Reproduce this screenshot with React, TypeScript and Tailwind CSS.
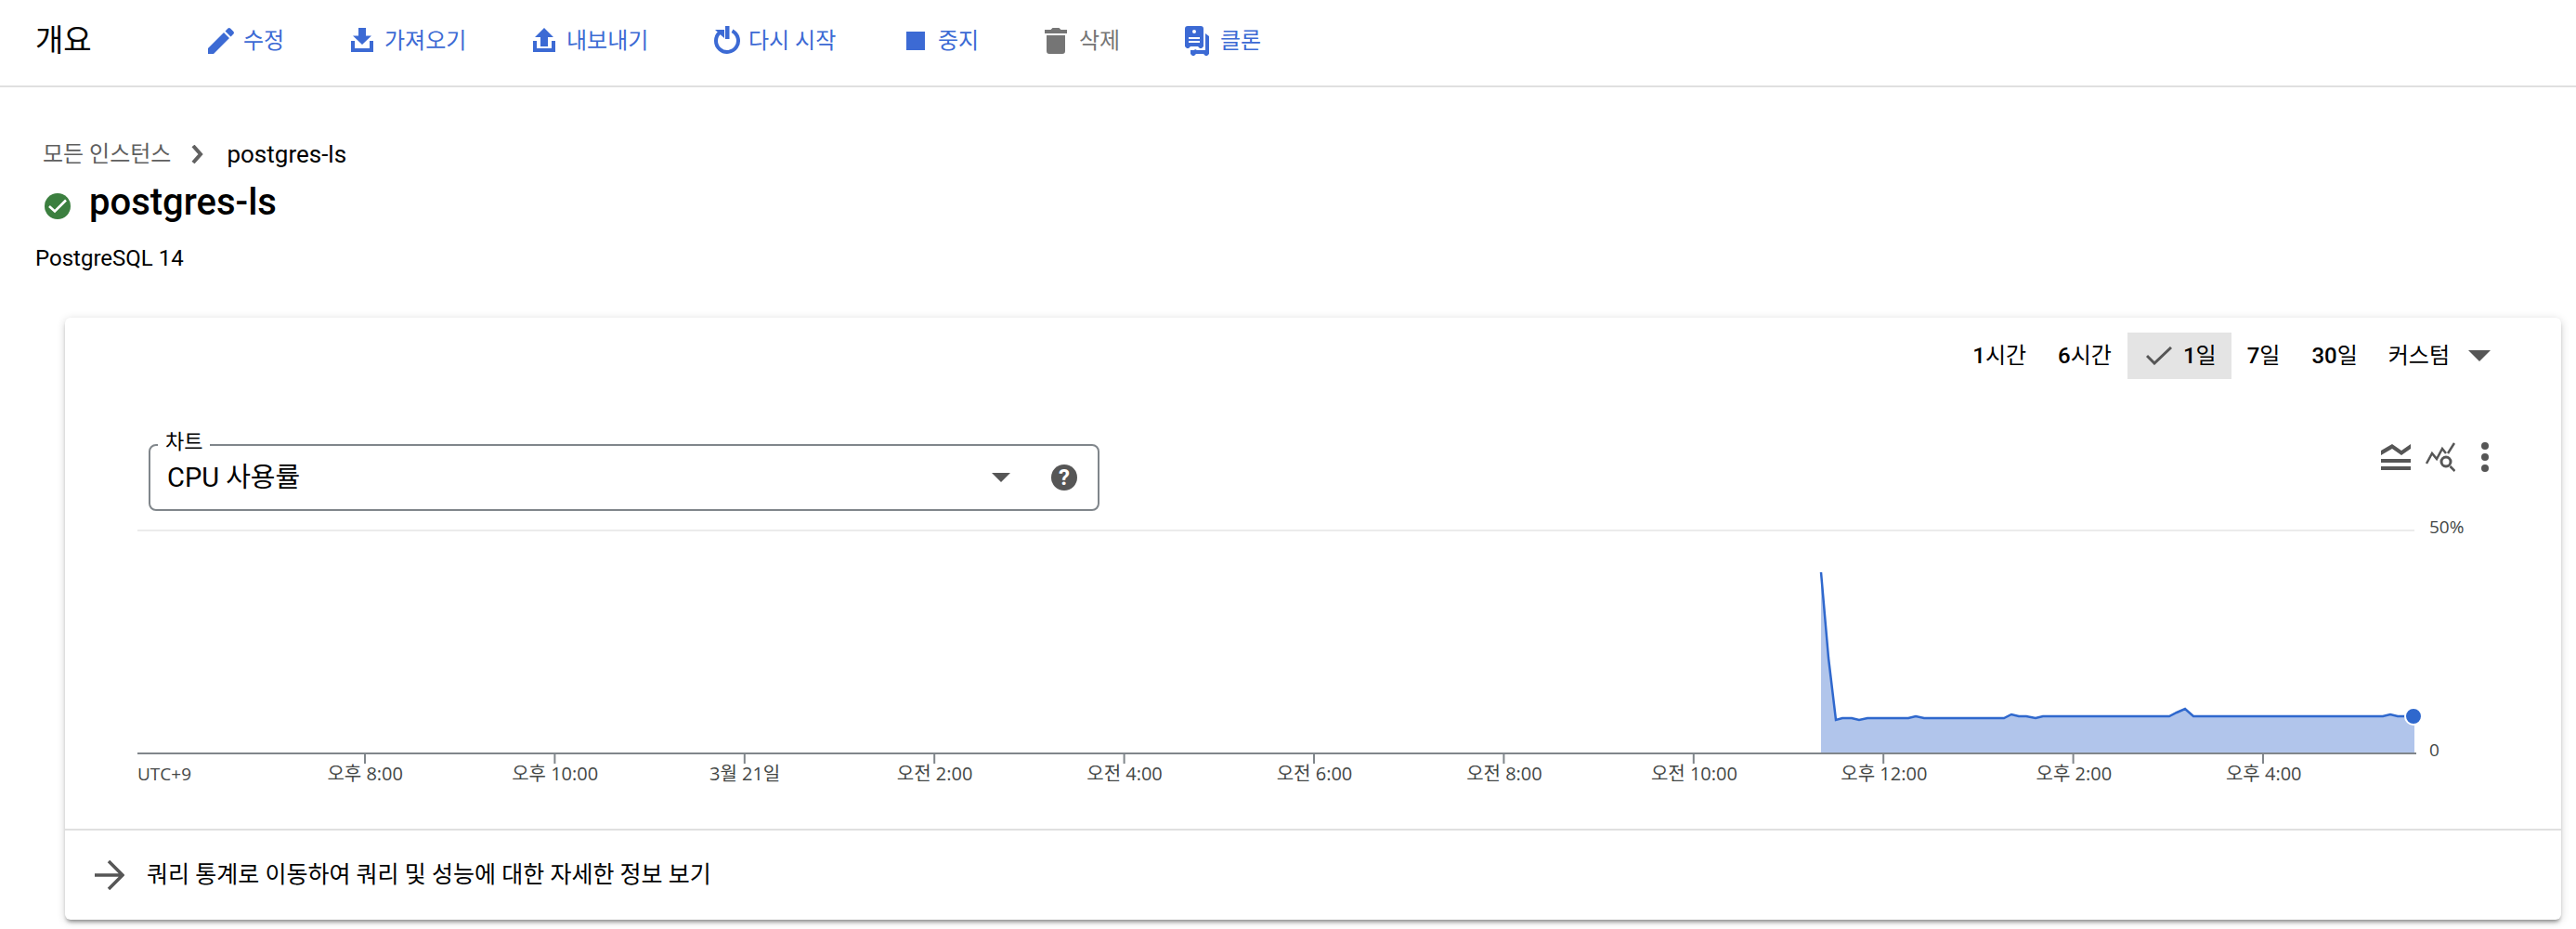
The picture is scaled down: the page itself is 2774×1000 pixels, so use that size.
import type { ReactNode } from 'react'

const actions: { label: string; icon: ReactNode; disabled?: boolean; place: string }[] = [
  {
    label: '수정',
    place: 'w-[152px]',
    icon: <path d="M2 30v-6L19 7l6 6L8 30zM20.500 5.500l3-3a2 2 0 0 1 2.500 0l3.500 3.500a2 2 0 0 1 0 2.500l-3 3z" />,
  },
  {
    label: '가져오기',
    place: 'w-[196px]',
    icon: <path d="M12 2h8v8.500h6L16 20 6 10.500h6zM4 16h4v8h16v-8h4v12H4z" />,
  },
  {
    label: '내보내기',
    place: 'w-[196px]',
    icon: <path d="M16 2l10 10h-6v10h-8V12H6zM4 16h4v8h16v-8h4v12H4z" />,
  },
  {
    label: '다시 시작',
    place: 'w-[204px]',
    icon: (
      <>
        <path d="M15 0h4.500v14H15zM4 4h10v9l-4-3.500z" />
        <path d="M22.500 5.300A12 12 0 1 1 9 7" fill="none" stroke="currentColor" strokeWidth="4" />
      </>
    ),
  },
  { label: '중지', place: 'w-[152px]', icon: <path d="M6 6h20v20H6z" /> },
  {
    label: '삭제',
    place: 'w-[152px]',
    disabled: true,
    icon: <path d="M5 10h20v17a3 3 0 0 1-3 3H8a3 3 0 0 1-3-3zM3 4h6.500l2-2h7l2 2H27v4H3z" />,
  },
  {
    label: '클론',
    place: 'w-[100px]',
    icon: (
      <path
        fillRule="evenodd"
        d="M5 0h14a3 3 0 0 1 3 3v19l-2 2h-2l-2-2H8l-2 2H4l-2-2V3a3 3 0 0 1 3-3zM12 4a2 2 0 1 0 0 4 2 2 0 0 0 0-4zM6 12v2h12v-2zM6 16v2h12v-2zM24 8l4 3v19l-2 2h-2l-2-2h-8l-2 2h-2l-2-2v-4h4l1-1 2 1h9z"
      />
    ),
  },
]

const ticks = ['오후 8:00', '오후 10:00', '3월 21일', '오전 2:00', '오전 4:00', '오전 6:00', '오전 8:00', '오전 10:00', '오후 12:00', '오후 2:00', '오후 4:00']

const line =
  '1813,46 1821,138 1829,205 1836,203 1846,203 1854,205 1863,203 1907,203 1915,201 1924,203 2010,203 2018,199 2026,201 2034,201 2044,203 2052,201 2188,201 2196,197 2205,193 2214,201 2418,201 2426,199 2434,201 2452,201'

function Range({ count, unit }: { count: string; unit: string }) {
  return (
    <button className="h-[50px] px-[17px]">
      <span className="font-medium">{count}</span>
      {unit}
    </button>
  )
}

export default function App() {
  return (
    <div className="min-h-screen bg-white font-['Roboto','Noto_Sans_CJK_KR',sans-serif] text-2xl text-black">
      <header className="flex h-[94px] items-center border-b-2 border-[#e0e0e0] pb-1 pl-[38px]">
        <h1 className="w-[184px] text-[33px] leading-10">개요</h1>
        <nav className="flex items-center">
          {actions.map((a) => (
            <button
              key={a.label}
              disabled={a.disabled}
              className={`flex items-center gap-2 whitespace-nowrap text-[#3c6ad4] disabled:text-[#757575] ${a.place}`}
            >
              <svg viewBox="0 0 32 32" className="size-8 shrink-0" fill="currentColor" aria-hidden="true">
                {a.icon}
              </svg>
              {a.label}
            </button>
          ))}
        </nav>
      </header>

      <main className="pt-[54px]">
        <nav aria-label="breadcrumb" className="flex items-center pl-[46px] leading-9">
          <a href="#instances" className="text-[#5f5f5f]">모든 인스턴스</a>
          <svg viewBox="0 0 14 20" className="mr-6 ml-[22px] h-5 w-3.5" fill="none" stroke="#616161" strokeWidth="4" aria-hidden="true">
            <path d="M2 1l8 9-8 9" />
          </svg>
          <span className="text-[26px]">postgres-ls</span>
        </nav>
        <div className="flex items-center pt-2.5 pl-12">
          <svg viewBox="0 0 28 28" className="mt-2 size-7" aria-hidden="true">
            <circle cx="14" cy="14" r="14" fill="#3b7f3f" />
            <path d="M5 14l6 5.500L23 7.500" fill="none" stroke="#fff" strokeWidth="2.600" />
          </svg>
          <h2 className="pl-5 text-[40px] leading-[48px] font-medium">postgres-ls</h2>
        </div>
        <p className="pt-[18px] pl-[38px] leading-9">PostgreSQL 14</p>

        <section className="mt-[46px] mr-4 ml-[70px] rounded-md bg-white shadow-[0_4px_4px_-2px_#00000066,0_2px_10px_#0000002e]">
          <div className="flex justify-end pt-4 pr-[60px] leading-[50px]">
            <Range count="1" unit="시간" />
            <Range count="6" unit="시간" />
            <button aria-pressed="true" className="flex h-[50px] items-center gap-3 bg-[#e4e4e4] pr-4 pl-5">
              <svg viewBox="0 0 28 20" className="h-5 w-7" fill="none" stroke="#565656" strokeWidth="3" aria-hidden="true">
                <path d="M1 10l8 8L27 1" />
              </svg>
              <span>
                <span className="font-medium">1</span>일
              </span>
            </button>
            <Range count="7" unit="일" />
            <Range count="30" unit="일" />
            <button className="flex h-[50px] items-center gap-5 px-4">
              커스텀
              <svg viewBox="0 0 24 12" className="h-3 w-6" fill="#565656" aria-hidden="true">
                <path d="M0 0h24L12 12z" />
              </svg>
            </button>
          </div>

          <div className="flex justify-between pt-[70px] pr-[66px] pl-[90px]">
            <div className="relative flex h-[72px] w-[1024px] items-center rounded-lg border-2 border-[#80868b]">
              <label htmlFor="chart" className="absolute -top-[22px] left-2 bg-white px-2 text-[22px] leading-9">차트</label>
              <select id="chart" className="h-full grow appearance-none bg-transparent pl-[18px] text-[29px] outline-none">
                <option>CPU 사용률</option>
              </select>
              <svg viewBox="0 0 20 10" className="mr-11 h-2.5 w-5" fill="#565656" aria-hidden="true">
                <path d="M0 0h20L10 10z" />
              </svg>
              <button aria-label="도움말" className="mr-[22px] size-7 rounded-full bg-[#565656] text-2xl leading-7 font-bold text-white">?</button>
            </div>
            <div className="-mt-0.5 flex items-start gap-4 text-[#565656]">
              <button aria-label="범례">
                <svg viewBox="0 0 32 32" className="size-8" fill="currentColor" aria-hidden="true">
                  <path d="M0 18h32v4H0zM0 26h32v4H0zM0 9L12 2l10 7L32 2v5l-10 7-10-7-12 7z" />
                </svg>
              </button>
              <button aria-label="측정항목 탐색">
                <svg viewBox="0 0 32 32" className="size-8" fill="none" stroke="currentColor" strokeWidth="2.500" aria-hidden="true">
                  <path d="M1 23L7 12l5 6 6-11 4 5M24 12l7-11M26.500 26l5 5" />
                  <circle cx="22" cy="21" r="5" strokeWidth="3" />
                </svg>
              </button>
              <button aria-label="옵션 더보기">
                <svg viewBox="0 0 32 32" className="size-8" fill="currentColor" aria-hidden="true">
                  <circle cx="16" cy="4" r="4" />
                  <circle cx="16" cy="16" r="4" />
                  <circle cx="16" cy="28" r="4" />
                </svg>
              </button>
            </div>
          </div>

          <div className="mt-5 flex gap-3.5 pr-[94px] pl-[78px] font-['Open_Sans','Noto_Sans_CJK_KR',sans-serif] text-[19px] leading-[22px] text-[#444746]">
            <div className="min-w-0 grow">
              <svg viewBox="0 0 2454 252" className="block w-full overflow-visible" role="img" aria-label="CPU 사용률">
                <path d="M0 1H2452" stroke="#ebebeb" strokeWidth="2" />
                <polygon points={`1813,240 ${line} 2452,240`} fill="#b1c5eb" />
                <polyline points={line} fill="none" stroke="#2f68cd" strokeWidth="2.500" />
                <path d="M0 241H2454" stroke="#80868b" strokeWidth="2" />
                {ticks.map((t, i) => (
                  <path key={t} d={`M${245 + i * 204.400} 242v10`} stroke="#80868b" strokeWidth="2" />
                ))}
                <circle cx="2451" cy="201" r="9" fill="#2f68cd" stroke="#fff" strokeWidth="2" />
              </svg>
              <div className="flex pr-[62px]">
                <span className="w-[143px]">UTC+9</span>
                {ticks.map((t) => (
                  <span key={t} className="flex-1 text-center text-xl leading-[22px]">{t}</span>
                ))}
              </div>
            </div>
            <div className="flex h-[248px] w-12 flex-col justify-between">
              <span className="-mt-3.5">50%</span>
              <span>0</span>
            </div>
          </div>

          <a href="#query-insights" className="mt-12 flex h-[98px] items-center gap-6 border-t-2 border-[#e0e0e0] pl-8 text-[25px]">
            <svg viewBox="0 0 32 32" className="size-8" fill="none" stroke="#565656" strokeWidth="3.500" aria-hidden="true">
              <path d="M0 16h30M15 1l15 15-15 15" />
            </svg>
            쿼리 통계로 이동하여 쿼리 및 성능에 대한 자세한 정보 보기
          </a>
        </section>
      </main>
    </div>
  )
}
